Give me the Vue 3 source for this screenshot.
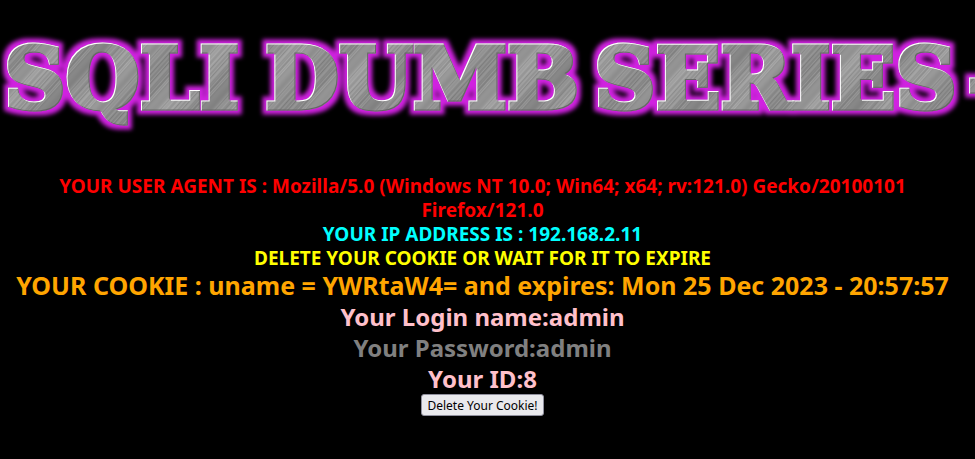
<script setup>
// Brushed metal: fine streaks of uneven grey over slow light and dark bands.
const TILE = 120
const streaks = Array.from({ length: TILE }, (_, i) => {
  const grain = (((i * 73 + i * i * 29 + i * i * i * 7) % 41) - 20) * 0.7
  const band = Math.sin((i / TILE) * Math.PI * 4) * 10
  const v = Math.round(146 + grain + band)
  return { at: i, c: `rgb(${v}, ${v}, ${v})` }
})
const words = [
  { text: 'SQLI', x: 4 },
  { text: 'DUMB', x: 265 },
  { text: 'SERIES', x: 594 },
  { text: '-', x: 967 },
]
const account = [
  { text: 'Your Login name:admin', tone: 'pink' },
  { text: 'Your Password:admin', tone: 'gray' },
  { text: 'Your ID:8', tone: 'pink' },
]
</script>

<template>
  <main class="page">
    <h1 class="banner">
      <svg class="logo">
        <defs>
          <pattern id="metal" :width="TILE" :height="TILE" patternUnits="userSpaceOnUse" patternTransform="rotate(42)">
            <rect v-for="s in streaks" :key="s.at" :x="s.at" width="1" :height="TILE" :fill="s.c" />
          </pattern>
          <filter id="neon" filterUnits="userSpaceOnUse" x="-20" y="0" width="1300" height="160" color-interpolation-filters="sRGB">
            <feMorphology in="SourceAlpha" operator="dilate" radius="4" result="wide" />
            <feGaussianBlur in="wide" stdDeviation="2" result="soft" />
            <feFlood flood-color="#d022e0" />
            <feComposite in2="soft" operator="in" result="glow" />
            <feOffset in="SourceAlpha" dx="1" dy="1" result="down" />
            <feComposite in="SourceAlpha" in2="down" operator="out" result="lightEdge" />
            <feFlood flood-color="#ffffff" />
            <feComposite in2="lightEdge" operator="in" result="light" />
            <feOffset in="SourceAlpha" dx="-1" dy="-1" result="up" />
            <feComposite in="SourceAlpha" in2="up" operator="out" result="darkEdge" />
            <feFlood flood-color="#666666" />
            <feComposite in2="darkEdge" operator="in" result="dark" />
            <feMerge>
              <feMergeNode in="glow" />
              <feMergeNode in="SourceGraphic" />
              <feMergeNode in="dark" />
              <feMergeNode in="light" />
            </feMerge>
          </filter>
        </defs>
        <text class="title" y="108" filter="url(#neon)"><tspan v-for="w in words" :key="w.text" :x="w.x">{{ w.text }}</tspan></text>
      </svg>
    </h1>
    <section class="info">
      <p class="small red">YOUR USER AGENT IS : Mozilla/5.0 (Windows NT 10.0; Win64; x64; rv:121.0) Gecko/20100101 Firefox/121.0</p>
      <p class="small cyan">YOUR IP ADDRESS IS : 192.168.2.11</p>
      <p class="small yellow">DELETE YOUR COOKIE OR WAIT FOR IT TO EXPIRE</p>
      <p class="large orange">YOUR COOKIE : uname = YWRtaW4= and expires: Mon 25 Dec 2023 - 20:57:57</p>
      <p v-for="a in account" :key="a.text" class="large" :class="a.tone">{{ a.text }}</p>
      <button class="delete" type="button">Delete Your Cookie!</button>
    </section>
  </main>
</template>

<style>
body {
  margin: 0;
  background: #000;
}
</style>

<style scoped>
.page {
  overflow: hidden;
  background: #000;
  font-family: "Noto Sans", "Open Sans", sans-serif;
}
.banner {
  margin: 0;
}
.logo {
  display: block;
  width: 100%;
  height: 174px;
}
.title {
  font: bold 85px "DejaVu Serif", serif;
  fill: url(#metal);
  stroke: url(#metal);
  stroke-width: 5px;
}
.info {
  padding: 0 10px 40px 0;
  text-align: center;
  font-weight: bold;
}
.info p {
  margin: 0;
}
.small {
  padding: 0 32px;
  font-size: 19px;
  line-height: 24px;
}
.large {
  font-size: 24px;
  line-height: 31px;
}
.red { color: #f00; }
.cyan { color: #0ff; }
.yellow { color: #ff0; }
.orange {
  color: orange;
  font-size: 25px;
}
.pink { color: pink; }
.gray { color: gray; }
.delete {
  display: block;
  margin: 0 auto;
  padding: 0 5px;
  height: 22px;
  border: 1px solid #8f8f9d;
  border-radius: 3px;
  background: #e9e9ed;
  color: #000;
  font: 12px "Noto Sans", sans-serif;
}
</style>
